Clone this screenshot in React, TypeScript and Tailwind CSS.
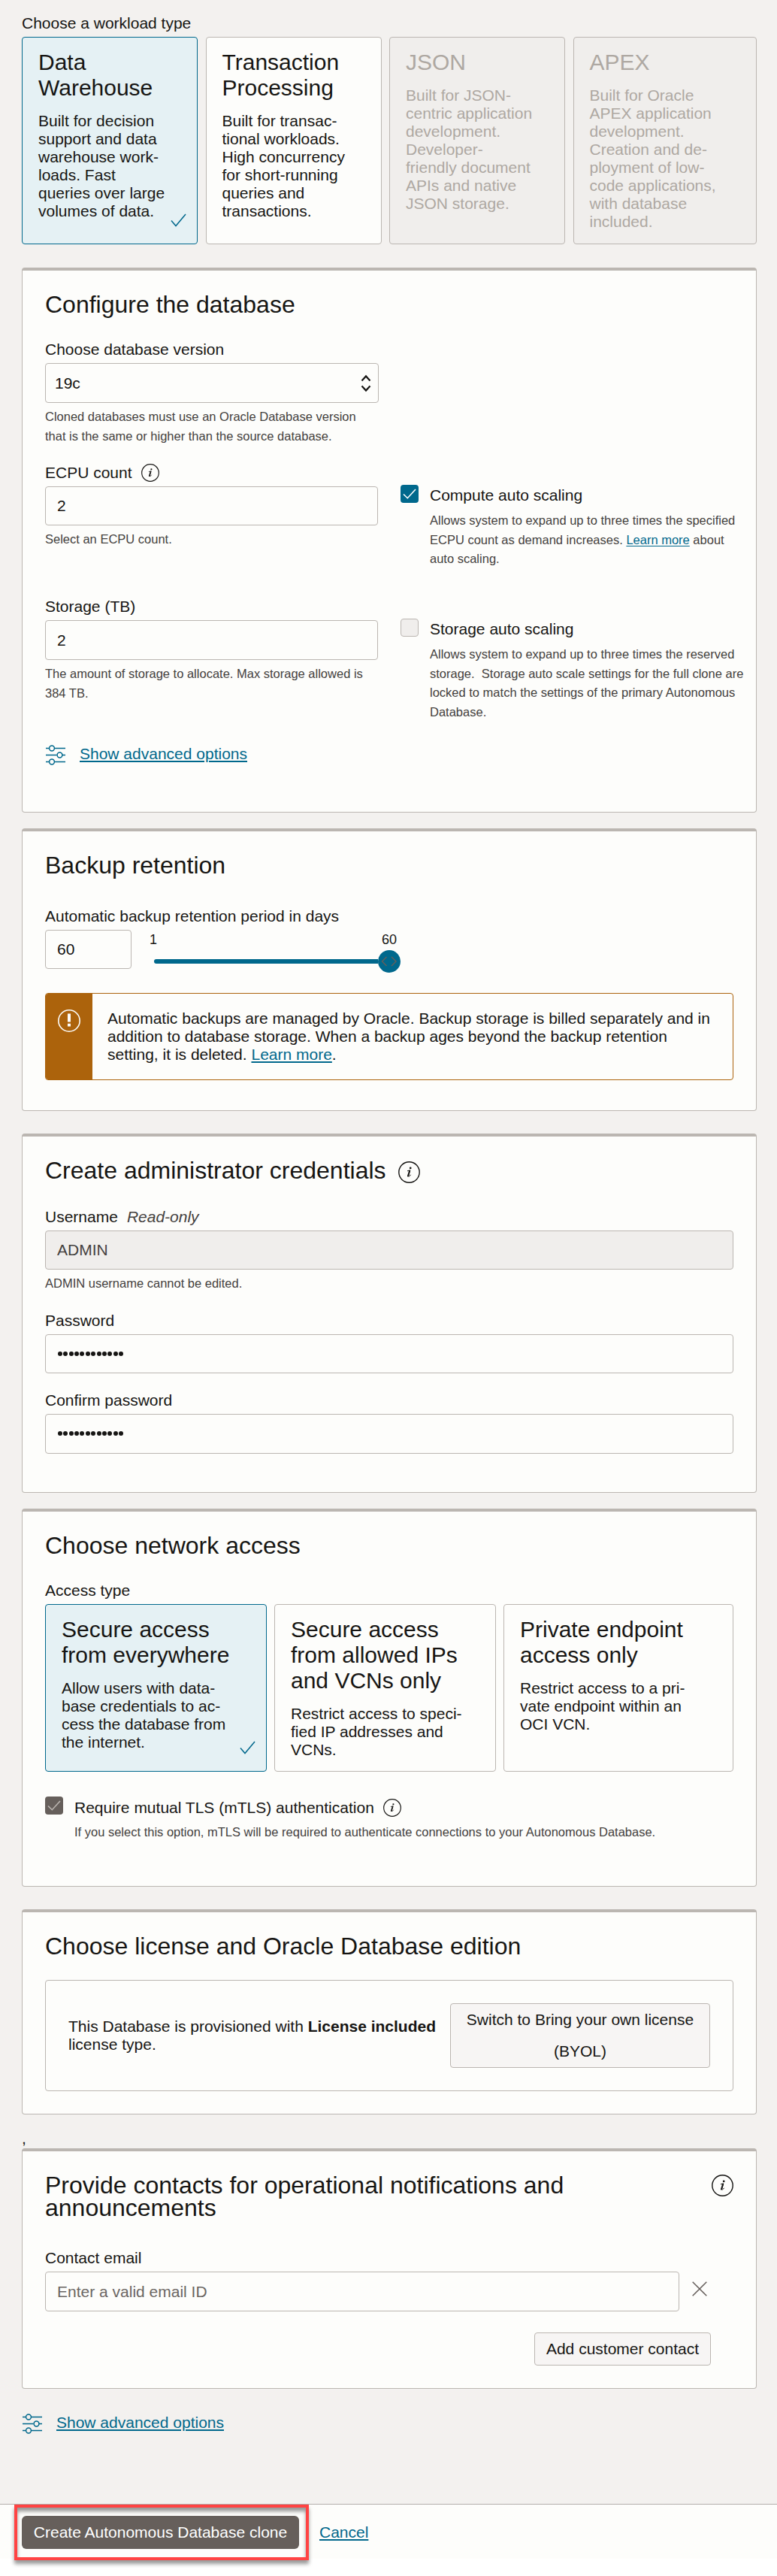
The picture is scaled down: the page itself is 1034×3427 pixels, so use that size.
import type { ReactNode } from "react";

const LINK = "text-[#00688c] underline decoration-2 underline-offset-2";

function InfoIcon({ size }: { size: number }) {
  return (
    <svg width={size} height={size} viewBox="0 0 29 29" fill="none" className="shrink-0">
      <circle cx="14.5" cy="14.5" r="13.7" stroke="#161513" strokeWidth="1.4" />
      <circle cx="16.2" cy="8.9" r="1.35" fill="#161513" />
      <path d="M12 12.8 L15.8 11.9 L13.6 19.2 Q13.5 20.4 14.600 19.900 Q15.700 19.200 16.500 17.800" stroke="#161513" strokeWidth="1" />
      <path d="M15.100 12.600 L12.900 19.600" stroke="#161513" strokeWidth="1.900" strokeLinecap="round" />
    </svg>
  );
}

function SlidersIcon() {
  return (
    <svg width="27" height="27" viewBox="0 0 27 27" fill="none" stroke="#00688c" strokeWidth="1.5" className="ml-px shrink-0">
      <path d="M0 4.5H5M12 4.5H26M0 13.500H14.500M21.500 13.500H26M0 22.500H5M12 22.500H26" />
      <circle cx="8" cy="4.500" r="3.400" />
      <circle cx="18.500" cy="13.500" r="3.400" />
      <circle cx="8" cy="22.500" r="3.400" />
    </svg>
  );
}

function CornerCheck() {
  return (
    <svg width="21" height="18" viewBox="0 0 21 18" fill="none" className="absolute right-3.5 bottom-[22px]">
      <path d="M1 9.5 L7 16.5 L20 1" stroke="#00688c" strokeWidth="1.5" />
    </svg>
  );
}

function Panel({ className, children }: { className: string; children: ReactNode }) {
  return (
    <section className={`rounded-[4px] border border-t-4 border-[#bbb6b1] bg-[#fdfdfb] px-[30px] pt-[30px] ${className}`}>
      {children}
    </section>
  );
}

function Heading({ children }: { children: ReactNode }) {
  return <h2 className="text-[32px] leading-[30px] whitespace-nowrap">{children}</h2>;
}

function Field({ className, children }: { className: string; children?: ReactNode }) {
  return (
    <div className={`flex items-center rounded-[4px] border border-[#bbb6b1] px-[15px] ${className}`}>{children}</div>
  );
}

function Help({ className = "", children }: { className?: string; children: ReactNode }) {
  return (
    <p className={`text-[16.5px] leading-[25.5px] whitespace-nowrap text-[#44413e] ${className}`}>{children}</p>
  );
}

type CardKind = "selected" | "plain" | "disabled";

function Card({ kind, title, body, className }: { kind: CardKind; title: string[]; body: string[]; className: string }) {
  const tone = {
    selected: "border-[#00688c] bg-[#e5f1f4]",
    plain: "border-[#bbb6b1] bg-[#fdfdfb]",
    disabled: "border-[#bbb6b1] bg-[#f0eeec] text-[#aea8a2]",
  }[kind];
  return (
    <div className={`relative rounded-[4px] border px-[21px] pt-4 whitespace-nowrap ${tone} ${className}`}>
      <h3 className="text-[30px] leading-[34px]">
        {title.map((l) => (
          <span key={l} className="block">{l}</span>
        ))}
      </h3>
      <p className="mt-[15px]">
        {body.map((l) => (
          <span key={l} className="block">{l}</span>
        ))}
      </p>
      {kind === "selected" && <CornerCheck />}
    </div>
  );
}

function CheckBox({ kind }: { kind: "on" | "off" | "locked" }) {
  const tone = {
    on: "bg-[#00688c]",
    off: "border border-[#bbb6b1] bg-[#f0eeec]",
    locked: "bg-[#665f5b]",
  }[kind];
  return (
    <div className={`flex h-6 w-6 shrink-0 items-center justify-center rounded-[4px] ${tone}`}>
      {kind !== "off" && (
        <svg width="18" height="14" viewBox="0 0 18 14" fill="none">
          <path d="M1 7.5 L6.3 12.7 L17 1" stroke={kind === "on" ? "#ffffff" : "#bbb6b1"} strokeWidth="1.6" />
        </svg>
      )}
    </div>
  );
}

function Dots() {
  return (
    <div className="flex gap-[1.36px] pb-[1px] pl-[1px]">
      {Array.from({ length: 12 }, (_, i) => (
        <span key={i} className="h-[6px] w-[6px] rounded-full bg-[#161513]" />
      ))}
    </div>
  );
}

export default function App() {
  return (
    <div className="flex h-[3427px] w-[1034px] flex-col overflow-hidden bg-[#f3f1ef] font-['Liberation_Sans',Arial,sans-serif] text-[21px] leading-[24px] text-[#161513]">
      <main className="pt-[19px] pr-[27px] pl-[29px]">
        <div>Choose a workload type</div>
        <div className="mt-1.5 flex h-[276px]">
          <Card className="mr-[10.5px] w-[234px]" kind="selected" title={["Data", "Warehouse"]}
            body={["Built for decision", "support and data", "warehouse work-", "loads. Fast", "queries over large", "volumes of data."]} />
          <Card className="mr-[10.5px] w-[234px]" kind="plain" title={["Transaction", "Processing"]}
            body={["Built for transac-", "tional workloads.", "High concurrency", "for short-running", "queries and", "transactions."]} />
          <Card className="mr-[10.5px] w-[234px]" kind="disabled" title={["JSON"]}
            body={["Built for JSON-", "centric application", "development.", "Developer-", "friendly document", "APIs and native", "JSON storage."]} />
          <Card className="flex-1" kind="disabled" title={["APEX"]}
            body={["Built for Oracle", "APEX application", "development.", "Creation and de-", "ployment of low-", "code applications,", "with database", "included."]} />
        </div>

        <Panel className="mt-[31px] h-[725px]">
          <Heading>Configure the database</Heading>
          <div className="mt-[33px]">Choose database version</div>
          <div className="mt-1.5 flex h-[53px] w-[444px] items-center justify-between rounded-[4px] border border-[#bbb6b1] pr-[9px] pl-3">
            <span>19c</span>
            <svg width="14" height="24" viewBox="0 0 14 24" fill="none" stroke="#161513" strokeWidth="2.2">
              <path d="M1.5 8.5 L7 2.5 L12.5 8.5M1.5 15.5 L7 21.5 L12.5 15.5" />
            </svg>
          </div>
          <Help className="mt-[6px]">
            Cloned databases must use an Oracle Database version
            <br />
            that is the same or higher than the source database.
          </Help>

          <div className="mt-6 flex h-[178px]">
            <div className="w-[443px] shrink-0">
              <div className="flex h-6 items-center gap-3">
                ECPU count <InfoIcon size={24} />
              </div>
              <Field className="mt-1.5 h-[52px]">2</Field>
              <Help className="mt-[6px]">Select an ECPU count.</Help>
            </div>
            <div className="mt-7 ml-[30px] flex items-start gap-[15px]">
              <CheckBox kind="on" />
              <div>
                <div className="mt-[2px]">Compute auto scaling</div>
                <Help className="mt-[9px]">
                  Allows system to expand up to three times the specified
                  <br />
                  ECPU count as demand increases. <a className="text-[#00688c] underline decoration-1 underline-offset-2">Learn more</a> about
                  <br />
                  auto scaling.
                </Help>
              </div>
            </div>
          </div>

          <div className="flex h-[196px]">
            <div className="w-[443px] shrink-0">
              <div>Storage (TB)</div>
              <Field className="mt-1.5 h-[53px]">2</Field>
              <Help className="mt-[6px]">
                The amount of storage to allocate. Max storage allowed is
                <br />
                384 TB.
              </Help>
            </div>
            <div className="mt-[28px] ml-[30px] flex items-start gap-[15px]">
              <CheckBox kind="off" />
              <div>
                <div className="mt-[2px]">Storage auto scaling</div>
                <Help className="mt-[9px]">
                  Allows system to expand up to three times the reserved
                  <br />
                  storage.&nbsp; Storage auto scale settings for the full clone are
                  <br />
                  locked to match the settings of the primary Autonomous
                  <br />
                  Database.
                </Help>
              </div>
            </div>
          </div>

          <div className="flex h-[26px] items-start gap-[18px]">
            <SlidersIcon />
            <a className={LINK}>Show advanced options</a>
          </div>
        </Panel>

        <Panel className="mt-[21px] h-[376px]">
          <Heading>Backup retention</Heading>
          <div className="mt-[41px]">Automatic backup retention period in days</div>
          <div className="mt-1.5 flex h-[52px]">
            <Field className="w-[115px]">60</Field>
            <div className="ml-[26px] w-[332px]">
              <div className="flex h-[24px] justify-between pt-[3px] text-[18px] leading-[20px]">
                <span className="-ml-[2px]">1</span>
                <span className="mr-[5px]">60</span>
              </div>
              <div className="ml-[4px] flex h-[36px] items-center">
                <div className="h-1.5 flex-1 rounded-l-full bg-[#00688c]" />
                <svg width="30" height="30" viewBox="0 0 30 30" fill="none">
                  <circle cx="15" cy="15" r="15" fill="#00688c" />
                  <path d="M11.5 9 L5.5 15 L11.5 21M18 9 L24 15 L18 21" stroke="#665f5b" strokeWidth="1.4" />
                </svg>
              </div>
            </div>
          </div>
          <div className="mt-8 flex h-[116px] overflow-hidden rounded-[4px] border border-[#ac630c]">
            <div className="flex w-[62px] justify-center bg-[#ac630c] pt-[21px]">
              <svg width="30" height="30" viewBox="0 0 30 30" fill="none">
                <circle cx="15" cy="15" r="14.2" stroke="#fdfdfb" strokeWidth="1.6" />
                <path d="M13 5.5H17V16.5H13ZM13 18.7H17V22.5H13Z" fill="#fdfdfb" />
              </svg>
            </div>
            <p className="pt-[21px] pl-[20px] whitespace-nowrap">
              Automatic backups are managed by Oracle. Backup storage is billed separately and in
              <br />
              addition to database storage. When a backup ages beyond the backup retention
              <br />
              setting, it is deleted. <a className={LINK}>Learn more</a>.
            </p>
          </div>
        </Panel>

        <Panel className="mt-[30px] h-[478px]">
          <div className="flex h-[30px] items-center gap-[16px]">
            <Heading>Create administrator credentials</Heading>
            <div className="pt-[4px]"><InfoIcon size={29} /></div>
          </div>
          <div className="mt-[35px] flex gap-3">
            <span>Username</span>
            <span className="text-[#44413e] italic">Read-only</span>
          </div>
          <Field className="mt-1.5 h-[52px] bg-[#f0eeec] text-[#44413e]">ADMIN</Field>
          <Help className="mt-[6px]">ADMIN username cannot be edited.</Help>
          <div className="mt-[24.5px]">Password</div>
          <Field className="mt-1.5 h-[52px]"><Dots /></Field>
          <div className="mt-6">Confirm password</div>
          <Field className="mt-1.5 h-[53px]"><Dots /></Field>
        </Panel>

        <Panel className="mt-[21px] h-[503px]">
          <Heading>Choose network access</Heading>
          <div className="mt-[33px]">Access type</div>
          <div className="mt-1.5 flex h-[223px]">
            <Card className="mr-[10.5px] w-[294.5px]" kind="selected" title={["Secure access", "from everywhere"]}
              body={["Allow users with data-", "base credentials to ac-", "cess the database from", "the internet."]} />
            <Card className="mr-[10.5px] w-[294.5px]" kind="plain" title={["Secure access", "from allowed IPs", "and VCNs only"]}
              body={["Restrict access to speci-", "fied IP addresses and", "VCNs."]} />
            <Card className="flex-1" kind="plain" title={["Private endpoint", "access only"]}
              body={["Restrict access to a pri-", "vate endpoint within an", "OCI VCN."]} />
          </div>
          <div className="mt-[33px] flex items-start gap-[15px]">
            <CheckBox kind="locked" />
            <div>
              <div className="mt-[3px] flex h-6 items-center gap-3">
                Require mutual TLS (mTLS) authentication <InfoIcon size={24} />
              </div>
              <Help className="mt-[8px]">
                If you select this option, mTLS will be required to authenticate connections to your Autonomous Database.
              </Help>
            </div>
          </div>
        </Panel>

        <Panel className="mt-[30px] h-[273px]">
          <Heading>Choose license and Oracle Database edition</Heading>
          <div className="mt-[30px] flex h-[148px] items-center justify-between rounded-[4px] border border-[#bbb6b1] px-[30px]">
            <p className="whitespace-nowrap">
              This Database is provisioned with <b>License included</b>
              <br />
              license type.
            </p>
            <button className="h-[86px] w-[346px] rounded-[4px] border border-[#bbb6b1] bg-[#f7f5f4] leading-[42px] whitespace-nowrap">
              Switch to Bring your own license
              <br />
              (BYOL)
            </button>
          </div>
        </Panel>

        <div className="h-[45px] pt-5">,</div>

        <Panel className="h-[320px]">
          <div className="flex h-[60px] justify-between">
            <Heading>
              Provide contacts for operational notifications and
              <br />
              announcements
            </Heading>
            <div className="pt-px"><InfoIcon size={29} /></div>
          </div>
          <div className="mt-10">Contact email</div>
          <div className="mt-1.5 flex h-[53px]">
            <Field className="w-[844px] text-[#6b6663]">Enter a valid email ID</Field>
            <svg width="20" height="20" viewBox="0 0 20 20" fill="none" className="mt-[13px] ml-[17px]">
              <path d="M0.7 0.7 L19.3 19.3M19.3 0.7 L0.7 19.3" stroke="#665f5b" strokeWidth="1.5" />
            </svg>
          </div>
          <div className="mt-7 mr-[30px] flex justify-end">
            <button className="h-11 w-[235px] rounded-[4px] border border-[#bbb6b1] bg-[#f7f5f4] whitespace-nowrap">
              Add customer contact
            </button>
          </div>
        </Panel>

        <div className="mt-[33px] flex h-[27px] items-start gap-[18px]">
          <SlidersIcon />
          <a className={LINK}>Show advanced options</a>
        </div>
      </main>

      <footer className="relative z-10 mt-[93px] h-[73px] shrink-0 border-t border-[#b3afac] bg-[#fdfdfb]">
        <div className="flex items-start pl-[19px]">
          <div className="h-[74px] w-[392px] border-4 border-[#ff4343] px-1.5 pt-[11px] shadow-[0_5px_5px_rgba(0,0,0,0.4),inset_0_5px_5px_rgba(0,0,0,0.4)]">
            <button className="h-11 w-[369px] rounded-[6px] bg-[#665f5b] whitespace-nowrap text-white">
              Create Autonomous Database clone
            </button>
          </div>
          <a className={`mt-[25px] ml-[14px] ${LINK}`}>Cancel</a>
        </div>
      </footer>
      <div className="flex-1 bg-white" />
    </div>
  );
}
